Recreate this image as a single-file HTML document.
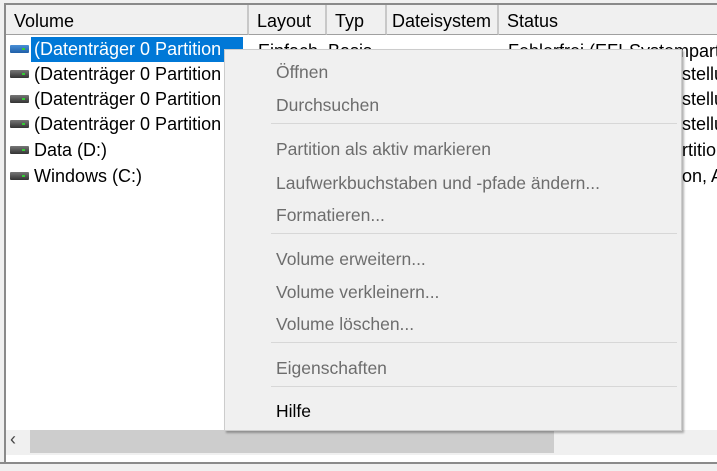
<!DOCTYPE html>
<html><head><meta charset="utf-8"><style>
*{margin:0;padding:0;box-sizing:border-box}
html,body{width:717px;height:471px;overflow:hidden}
body{background:#f0f0f0;font-family:"Liberation Sans",sans-serif;font-size:18px;position:relative}
.abs{position:absolute}
.clip{position:absolute;left:0;top:0;width:717px;height:471px;overflow:hidden}
.frame{left:4px;top:3px;width:713px;height:459px;border-left:2px solid #8a8a8a;border-top:2px solid #8a8a8a;background:#fff}
.hdr{top:5px;height:30px;background:#f0f0f0;border-bottom:1px solid #a0a0a0;border-right:2px solid #c8c8c8;line-height:32px;padding-left:8px;color:#000;white-space:nowrap;overflow:hidden}
.row{left:8px;height:25px;line-height:25px;white-space:nowrap;color:#000}
.ico{position:absolute;left:2px;top:8px;width:19px;height:8px;background:linear-gradient(#777,#333);border-radius:1px}
.ico:after{content:"";position:absolute;right:4px;top:3px;width:3px;height:2px;background:#3c3}
.menu{left:224px;top:49px;width:458px;height:382px;background:#f0f0f0;border:1px solid #ccc;box-shadow:2px 2px 2px rgba(0,0,0,.3)}
.mi{position:absolute;left:51px;color:#6d6d6d;font-size:17.5px;line-height:20px;white-space:nowrap}
.sep{position:absolute;left:46px;width:406px;height:1px;background:#d7d7d7}
</style></head><body>
<div class="clip">
<div class="abs frame"></div>
<div class="abs hdr" style="left:6px;width:243px">Volume</div>
<div class="abs hdr" style="left:249px;width:78px">Layout</div>
<div class="abs hdr" style="left:327px;width:60px">Typ</div>
<div class="abs hdr" style="left:387px;width:112px;padding-left:5px">Dateisystem</div>
<div class="abs hdr" style="left:499px;width:218px;border-right:none">Status</div>
<div class="abs" style="left:31px;top:37px;width:212px;height:25px;background:#0078d7"></div>
<div class="abs row" style="top:37px"><span class="ico" style="background:linear-gradient(#4a8fd6,#1f5fa8)"></span><span style="margin-left:26px;color:#fff">(Datenträger 0 Partition</span></div>
<div class="abs row" style="top:62px"><span class="ico"></span><span style="margin-left:26px">(Datenträger 0 Partition</span></div>
<div class="abs row" style="top:87px"><span class="ico"></span><span style="margin-left:26px">(Datenträger 0 Partition</span></div>
<div class="abs row" style="top:112px"><span class="ico"></span><span style="margin-left:26px">(Datenträger 0 Partition</span></div>
<div class="abs row" style="top:138px"><span class="ico"></span><span style="margin-left:26px">Data (D:)</span></div>
<div class="abs row" style="top:164px"><span class="ico"></span><span style="margin-left:26px">Windows (C:)</span></div>
<div class="abs row" style="left:258px;top:39px">Einfach&nbsp;&nbsp;Basis</div>
<div class="abs row" style="left:508px;top:39px;width:209px;overflow:hidden">Fehlerfrei (EFI-Systempartition)</div>
<div class="abs row" style="left:682px;top:62px;width:35px;overflow:hidden">stellung</div>
<div class="abs row" style="left:682px;top:87px;width:35px;overflow:hidden">stellung</div>
<div class="abs row" style="left:682px;top:112px;width:35px;overflow:hidden">stellung</div>
<div class="abs row" style="left:682px;top:138px;width:35px;overflow:hidden">rtition</div>
<div class="abs row" style="left:682px;top:164px;width:35px;overflow:hidden">on, A</div>
<div class="abs" style="left:6px;top:430px;width:711px;height:25px;background:#f0f0f0"></div>
<div class="abs" style="left:30px;top:430px;width:524px;height:23px;background:#cdcdcd"></div>
<div class="abs" style="left:10px;top:429px;font-size:18px;color:#444">&lsaquo;</div>
<div class="abs" style="left:6px;top:455px;width:711px;height:2px;background:#fff"></div>
<div class="abs" style="left:0;top:462px;width:717px;height:2px;background:#8a8a8a"></div>
<div class="abs" style="left:0;top:464px;width:717px;height:7px;background:#f0f0f0"></div>
<div class="abs menu">
<div class="mi" style="top:12px">Öffnen</div>
<div class="mi" style="top:45px">Durchsuchen</div>
<div class="sep" style="top:73px"></div>
<div class="mi" style="top:89px">Partition als aktiv markieren</div>
<div class="mi" style="top:123px">Laufwerkbuchstaben und -pfade ändern...</div>
<div class="mi" style="top:155px">Formatieren...</div>
<div class="sep" style="top:183px"></div>
<div class="mi" style="top:199px">Volume erweitern...</div>
<div class="mi" style="top:232px">Volume verkleinern...</div>
<div class="mi" style="top:264px">Volume löschen...</div>
<div class="sep" style="top:292px"></div>
<div class="mi" style="top:308px">Eigenschaften</div>
<div class="sep" style="top:336px"></div>
<div class="mi" style="top:351px;color:#000">Hilfe</div>
</div>
</div>
</body></html>
